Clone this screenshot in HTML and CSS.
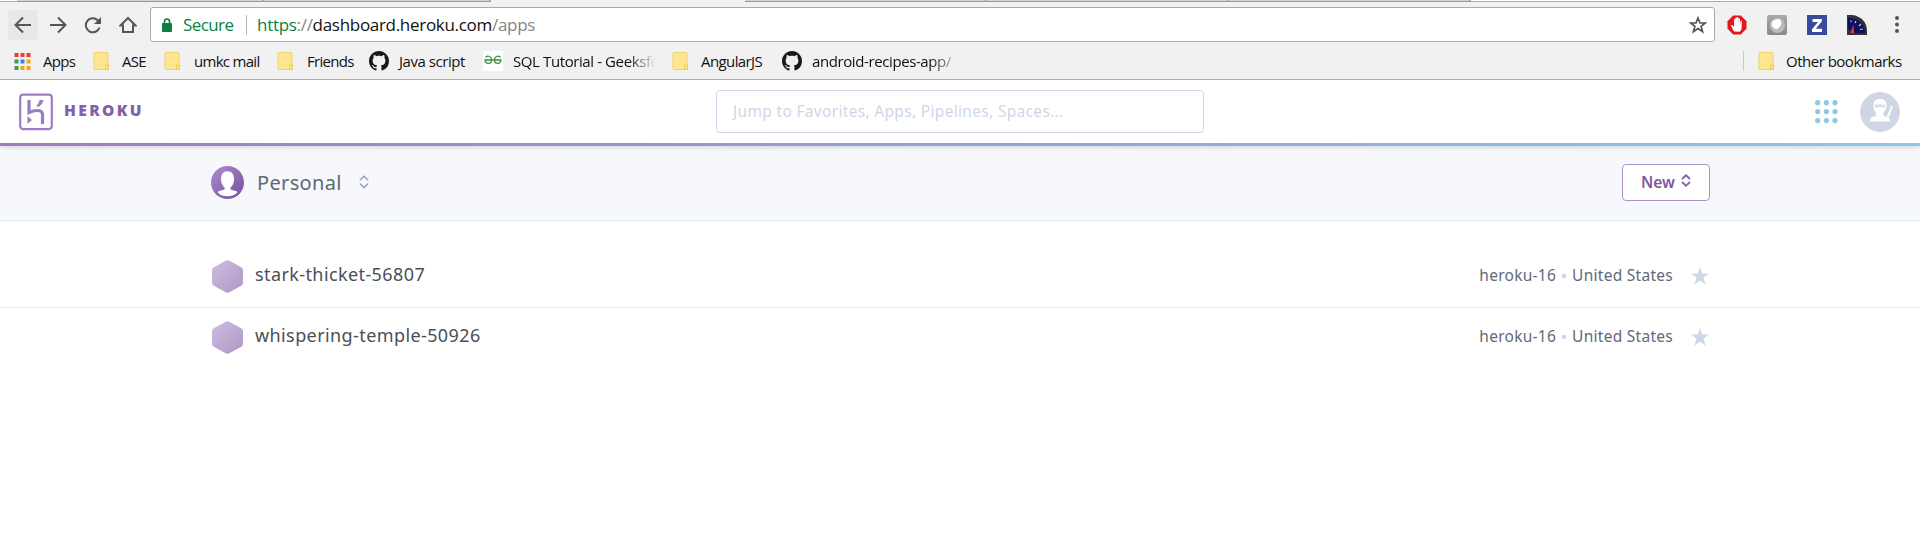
FILE: index.html
```html
<!DOCTYPE html>
<html lang="en">
<head>
<meta charset="utf-8">
<title>Heroku Dashboard</title>
<link rel="stylesheet" href="styles.css">
</head>
<body>
<svg class="defs" width="0" height="0" aria-hidden="true">
  <defs>
    <linearGradient id="purple" x1="0" y1="0" x2="1" y2="1"><stop offset="0" stop-color="#ac8dcf"/><stop offset="1" stop-color="#764f9c"/></linearGradient>
    <linearGradient id="lilac" x1="0" y1="0" x2="1" y2="1"><stop offset="0" stop-color="#cdbde1"/><stop offset="1" stop-color="#ae97c4"/></linearGradient>
    <linearGradient id="silver" x1="0" y1="0" x2="0" y2="1"><stop offset="0" stop-color="#aaa"/><stop offset="1" stop-color="#888"/></linearGradient>
    <symbol id="folder" viewBox="0 0 16 20"><path d="M2 1.500h12a1 1 0 0 1 1 1V18.500H2a1 1 0 0 1-1-1v-15a1 1 0 0 1 1-1z" fill="#ffe58f" stroke="#f0d269"/><path d="M12.500 18.500v-4.500h3v4.500z" fill="#ffe680" stroke="#f0cb45"/></symbol>
    <symbol id="github" viewBox="0 0 16 16"><path fill="#181818" d="M8 0C3.580 0 0 3.580 0 8c0 3.540 2.290 6.530 5.470 7.590.4.070.55-.17.55-.38 0-.19-.01-.82-.01-1.490-2.010.37-2.530-.49-2.690-.94-.09-.23-.48-.94-.82-1.130-.28-.15-.68-.52-.01-.53.63-.01 1.080.58 1.230.82.72 1.210 1.870.87 2.330.66.070-.52.28-.87.51-1.070-1.780-.2-3.640-.89-3.640-3.950 0-.87.31-1.590.82-2.150-.08-.2-.36-1.020.08-2.120 0 0 .67-.21 2.200.82.64-.18 1.320-.27 2-.27s1.360.09 2 .27c1.530-1.040 2.200-.82 2.200-.82.44 1.100.16 1.920.08 2.120.51.56.82 1.270.82 2.150 0 3.070-1.870 3.750-3.650 3.950.29.25.54.73.54 1.480 0 1.070-.01 1.930-.01 2.200 0 .21.15.46.55.38A8.010 8.010 0 0 0 16 8c0-4.420-3.580-8-8-8z"/></symbol>
    <symbol id="hexagon" viewBox="0 0 31 33"><path d="M13.700.7Q15.500-.3 17.300.7L29.200 7.300Q31 8.300 31 10.300V22.700Q31 24.700 29.200 25.700L17.300 32.300Q15.500 33.300 13.700 32.300L1.800 25.700Q0 24.700 0 22.700V10.300Q0 8.300 1.800 7.300Z" fill="url(#lilac)"/></symbol>
    <symbol id="star" viewBox="0 0 18 18"><path d="M9 0l2.200 6.500H18l-5.500 4.100 2.200 7.100L9 13.500l-5.700 4.200 2.200-7.100L0 6.500h6.800z" fill="#cfd7e6"/></symbol>
  </defs>
</svg>

<div class="browser">
  <div class="tabs"><i class="tab first"></i><i class="tab second"></i><i class="active-gap"></i><i class="tab"></i><i class="tab"></i><i class="tab"></i></div>
  <div class="toolbar">
    <span class="back"><svg width="18" height="18" viewBox="0 0 18 18"><path d="M9 1.500L1.500 9L9 16.500M1.500 9H17" class="nav-line"/></svg></span>
    <svg class="forward" width="18" height="18" viewBox="0 0 18 18"><path d="M9 1.500l7.500 7.500L9 16.500M16.500 9H1" class="nav-line"/></svg>
    <svg class="reload" width="18" height="18" viewBox="0 0 18 18"><path d="M15.500 11.500A7 7 0 1 1 13.500 4l1.500 1.500" class="nav-line"/><path d="M17 1v7h-7z" fill="#555"/></svg>
    <svg class="home" width="18" height="18" viewBox="0 0 18 18"><path d="M1.500 9.500L9 2l7.500 7.500H14V16H4V9.500z" class="nav-line"/></svg>
    <div class="omnibox">
      <svg class="lock" width="10" height="14" viewBox="0 0 10 14"><path d="M2.500 6V3.500a2.500 2.500 0 0 1 5 0V6" fill="none" stroke="#0b8043" stroke-width="1.600"/><rect y="5" width="10" height="9" rx="1" fill="#0b8043"/></svg>
      <span class="secure">Secure</span>
      <span class="url"><b>https</b>://<em>dashboard.heroku.com</em>/apps</span>
      <svg class="bookmark-star" width="18" height="18" viewBox="0 0 18 18"><path d="M9 2l2 5h5.300l-4.200 3.400 1.500 5.300L9 12.600l-4.600 3.100 1.500-5.300L1.700 7H7z" fill="none" stroke="#555" stroke-width="1.700"/></svg>
    </div>
    <div class="extensions">
      <svg width="20" height="20" viewBox="0 0 20 20"><path d="M6.200.5h7.600l5.700 5.700v7.600l-5.700 5.700H6.200L.5 13.800V6.200z" fill="#e2191c"/><path d="M7 16.500L4.200 11c-.3-1 1-1.500 1.600-.6L7 12V4.500c0-1 1.400-1 1.400 0V9V3c0-1.100 1.500-1.100 1.500 0v6V2.800c0-1 1.500-1 1.500 0V9l.2-5c0-1 1.400-1 1.400 0v6l.5-4c.1-.8 1.300-.7 1.300.2L14.600 13c-.2 2-1.200 3.500-2 3.700z" fill="#fff"/></svg>
      <svg width="20" height="20" viewBox="0 0 20 20"><rect width="20" height="20" rx="2" fill="url(#silver)"/><circle cx="10.500" cy="10.500" r="7.500" fill="#bbb"/><path d="M4.500 8c1-3 5-4.500 8-4 3 3 2 6-.5 8.500-2 2.500-4 1.500-5.500 0-2-1-2-2-2-4.500z" fill="#fff"/></svg>
      <svg width="20" height="20" viewBox="0 0 20 20"><rect width="20" height="20" fill="#394a9b"/><path d="M5.500 4h9.300v2.500l-6 7.200h6.200V17H5v-2.700l6-7.200H5.500z" fill="#fff"/></svg>
      <svg width="20" height="20" viewBox="0 0 20 20"><path d="M0 0h5c9 1 15 7 15 16v4H0z" fill="#333"/><path d="M1 3c9-1 17 6 17 14v1H7L1 14z" fill="#11105a"/><path d="M3.500 5.500l1 1.500M9 6L8 8M14 9l-2 2M16 14l-3 .5" stroke="#b9c4ff" stroke-width="1.200"/><path d="M6.500 9.500L7 18H3.500z" fill="#f2363d"/></svg>
      <svg class="menu" width="4" height="17" viewBox="0 0 4 17"><g fill="#555"><circle cx="2" cy="2" r="2"/><circle cx="2" cy="8.500" r="2"/><circle cx="2" cy="15" r="2"/></g></svg>
    </div>
  </div>
  <div class="bookmarks">
    <svg class="apps-icon" width="17" height="17" viewBox="0 0 16 17"><g fill="#f33a35"><path d="M0 0h4v4H0zM6 0h4v4H6zM12 0h4v4h-4z"/></g><g fill="#34a15a"><path d="M0 6.500h4v4H0zM0 13h4v4H0z"/></g><path d="M6 6.500h4v4H6z" fill="#2a86f0"/><path d="M12 6.500h4v4h-4zM6 13h4v4H6zM12 13h4v4h-4z" fill="#f9a60c"/></svg>
    <span class="bm-text bm-apps">Apps</span>
    <svg class="folder"><use href="#folder"/></svg><span class="bm-text bm-ase">ASE</span>
    <svg class="folder"><use href="#folder"/></svg><span class="bm-text bm-mail">umkc mail</span>
    <svg class="folder"><use href="#folder"/></svg><span class="bm-text bm-friends">Friends</span>
    <svg class="github"><use href="#github"/></svg><span class="bm-text bm-java">Java script</span>
    <svg class="geeks" width="20" height="20" viewBox="0 0 20 20"><path d="M0 0h20v20H0z" fill="#fff"/><path d="M2.500 6.300C5 4 8.500 5.500 8.500 9c0 4.500-6 4.500-6.500 0h16c-.5 4.500-6.500 4.500-6.500 0 0-3.500 3.500-5 6-2.700" fill="none" stroke="#3e8d48" stroke-width="1.300"/></svg>
    <span class="bm-text bm-sql">SQL Tutorial - Geeksfo</span>
    <svg class="folder"><use href="#folder"/></svg><span class="bm-text bm-angular">AngularJS</span>
    <svg class="github"><use href="#github"/></svg><span class="bm-text bm-android">android-recipes-app/</span>
    <div class="other"><svg class="folder"><use href="#folder"/></svg><span class="bm-text bm-other">Other bookmarks</span></div>
  </div>
</div>

<header class="header">
  <a class="brand">
    <svg width="34" height="38" viewBox="0 0 34 38"><rect x="1.200" y="1.600" width="31.600" height="34.500" rx="3" fill="#fff" stroke="#9e7cc1" stroke-width="2.200"/><path d="M10 7v12.500c4-2 13.500-4 13.500 2V31" fill="none" stroke="#9e7cc1" stroke-width="3.200"/><path d="M8.500 23l4.500 4-4.500 4zM20.500 7h4c-.5 2.500-2 4.500-4 6.500H17c1.800-2 3-4 3.500-6.500z" fill="#9e7cc1"/></svg>
    <span>HEROKU</span>
  </a>
  <div class="search"><span>Jump to Favorites, Apps, Pipelines, Spaces...</span></div>
  <div class="account">
    <svg width="23" height="24" viewBox="0 0 23 24"><g fill="#8cc8e8"><circle cx="2.700" cy="2.700" r="2.600"/><circle cx="11.400" cy="2.700" r="2.600"/><circle cx="20" cy="2.700" r="2.600"/><circle cx="2.700" cy="11.600" r="2.600"/><circle cx="11.400" cy="11.600" r="2.600"/><circle cx="20" cy="11.600" r="2.600"/><circle cx="2.700" cy="20.600" r="2.600"/><circle cx="11.400" cy="20.600" r="2.600"/><circle cx="20" cy="20.600" r="2.600"/></g></svg>
    <svg width="40" height="40" viewBox="0 0 40 40"><circle cx="20" cy="20" r="19.500" fill="#cfd7e6" stroke="#d8d8df"/><path d="M13.500 12c0-3.500 3-5 6.500-5s6.500 1.500 6.500 5c0 5-1.500 7-3 8.500v3l3 1.500 5-11.500 1.500.7-4.300 11.500c1 1 1.300 2 1.300 3.800H10c0-3.500 2-4.800 6-5.500v-3.500c-1.500-1.500-2.500-4-2.500-8.500z" fill="#fff"/><path d="M15 12.500h10v2.500c-2 1-3 .5-4 0h-2c-1 .5-3 1-4 0z" fill="#cfd7e6"/><path d="M16.500 13.700h2m3 0h2" stroke="#fff"/></svg>
  </div>
</header>

<section class="context">
  <div class="container">
    <svg width="33" height="33" viewBox="0 0 33 33"><circle cx="16.500" cy="16.500" r="16.500" fill="url(#purple)"/><path d="M16.500 5.200c4.500 0 6.500 3.300 6.500 7.800 0 4-1.500 7-3.500 8.500v2c1.500 1 5 1 7 2.500-2 3-6 4.300-10 4.300S8.500 29 6.500 26c2-1.500 5.500-1.500 7-2.500v-2C11.500 20 10 17 10 13c0-4.500 2-7.800 6.500-7.800z" fill="#fff"/></svg>
    <span class="personal">Personal</span>
    <svg width="10" height="14" viewBox="0 0 10 14"><path d="M.8 5.300L5 1.200l4.200 4.100M.8 8.500L5 12.600l4.200-4.100" fill="none" stroke="#96a3b8" stroke-width="1.500"/></svg>
    <button class="new"><span>New</span><svg width="10" height="14" viewBox="0 0 10 14"><path d="M1 5l4-3.700L9 5M1 8l4 3.700L9 8" fill="none" stroke="#8965ad" stroke-width="2"/></svg></button>
  </div>
</section>

<main class="apps">
  <div class="app"><div class="container"><svg class="hex"><use href="#hexagon"/></svg><span class="name">stark-thicket-56807</span><span class="stack">heroku-16</span><i class="dot"></i><span class="region">United States</span><svg class="fav"><use href="#star"/></svg></div></div>
  <div class="app"><div class="container"><svg class="hex"><use href="#hexagon"/></svg><span class="name">whispering-temple-50926</span><span class="stack">heroku-16</span><i class="dot"></i><span class="region">United States</span><svg class="fav"><use href="#star"/></svg></div></div>
</main>
</body>
</html>
```

FILE: styles.css
```css
* { box-sizing: border-box; }
body { margin: 0; background: #fff; font-family: "Noto Sans", sans-serif; color: #4a4f57; height: 557px; overflow: hidden; }
svg { display: block; flex: none; }
.defs { position: absolute; }
span { white-space: nowrap; }

.browser { height: 80px; background: #f1f1f1; border-bottom: 1px solid #b0b0b0; font-family: "Open Sans", sans-serif; color: #111; }
.tabs { display: flex; height: 2px; border-bottom: 1px solid #aaa; background: #fff; padding-left: 17px; }
.tab { flex: none; width: 242px; height: 2px; background: #d5d5d5; border-right: 2px solid #aaa; border-bottom: 1px solid #999; }
.tab.first { width: 247px; }
.tab.second { width: 227px; }
.active-gap { flex: none; width: 254px; height: 2px; background: #f1f1f1; }
.toolbar { display: flex; align-items: center; height: 45px; }
.nav-line { fill: none; stroke: #555; stroke-width: 2; }
.back { display: flex; align-items: center; justify-content: center; width: 30px; height: 30px; margin-left: 8px; background: #e8e8e8; border-radius: 3px; }
.forward { margin-left: 11px; }
.reload { margin-left: 17px; }
.home { margin-left: 17px; }
.omnibox { display: flex; flex: none; align-items: center; width: 1565px; height: 35px; margin-left: 13px; background: #fff; border: 1px solid #aaa; border-radius: 3px; font-size: 17px; }
.lock { margin-left: 11px; }
.secure { width: 64px; margin-left: 11px; color: #0b8043; letter-spacing: -.6px; border-right: 1px solid #b5b5b5; line-height: 20px; }
.url { margin-left: 10px; color: #858585; letter-spacing: -.3px; }
.url b { color: #0b8043; font-weight: 400; }
.url em { color: #111; font-style: normal; }
.bookmark-star { margin: 0 7px 0 auto; }
.extensions { display: flex; align-items: center; gap: 20px; margin-left: 12px; }
.menu { margin-left: 8px; }
.bookmarks { display: flex; align-items: center; height: 28px; font-size: 15px; }
.apps-icon { margin-left: 14px; }
.bm-text { flex: none; letter-spacing: -.7px; line-height: 20px; margin-bottom: 1px; }
.bm-apps { margin-left: 12px; width: 50px; }
.folder { width: 16px; height: 20px; }
.bm-ase { margin-left: 13px; width: 42px; }
.bm-mail { margin-left: 14px; width: 83px; }
.bm-friends { margin-left: 14px; width: 62px; }
.github { width: 20px; height: 20px; }
.bm-java { margin-left: 10px; width: 84px; letter-spacing: -.45px; }
.bm-sql { margin-left: 10px; width: 159px; letter-spacing: -.4px; -webkit-mask: linear-gradient(90deg, #000 115px, transparent 143px); mask: linear-gradient(90deg, #000 115px, transparent 143px); }
.bm-angular { margin-left: 13px; width: 81px; letter-spacing: -.6px; }
.bm-android { margin-left: 10px; width: 145px; letter-spacing: -.4px; -webkit-mask: linear-gradient(90deg, #000 118px, transparent 150px); mask: linear-gradient(90deg, #000 118px, transparent 150px); }
.other { display: flex; align-items: center; height: 20px; margin-left: auto; padding-left: 14px; border-left: 1px solid #c8c8c8; }
.bm-other { margin-left: 12px; width: 134px; letter-spacing: -.5px; }

.header { display: grid; grid-template-columns: 1fr 488px 1fr; align-items: center; height: 66px; padding: 0 20px 3px 20px; background: linear-gradient(90deg, #9e7cc1, #8cc8e8) bottom / 100% 3px no-repeat #fff; box-shadow: 0 2px 4px rgba(0, 0, 0, .12); position: relative; }
.brand { display: flex; align-items: center; gap: 11px; margin-left: -1px; color: #8560a9; font: 800 15.500px "Open Sans", sans-serif; letter-spacing: 2.400px; }
.brand span { margin-bottom: 4px; }
.search { height: 43px; padding: 0 16px; border: 1px solid #cfd7e6; border-radius: 4px; color: #cfd7e6; font-size: 15.500px; letter-spacing: .32px; line-height: 41px; }
.account { display: flex; align-items: center; justify-content: flex-end; gap: 22px; }

.container { display: flex; align-items: center; width: 1500px; height: 100%; margin: 0 auto; }
.context { height: 75px; background: #f7f8fc; border-bottom: 1px solid #e3e8ef; }
.context .container { padding: 0 0 2px 1px; }
.personal { margin-left: 13px; width: 102px; font-size: 20px; letter-spacing: .35px; color: #5d6878; }
.new { display: flex; align-items: center; gap: 6px; width: 88px; height: 37px; margin-left: auto; padding: 0 0 0 18px; background: #fff; border: 1px solid #ae93cb; border-radius: 4px; color: #79589f; font: 600 15.500px "Noto Sans", sans-serif; }
.new svg { margin-bottom: 2px; }
.apps { padding-top: 24px; }
.app { height: 58px; }
.app:first-child { height: 63px; border-bottom: 1px solid #ebedf0; }
.app .container { padding: 0 1px 0 2px; }
.hex { width: 31px; height: 33px; }
.name { margin: 0 auto 4px 12px; font-size: 18px; letter-spacing: .4px; }
.stack, .region { margin-bottom: 2px; font-size: 15.500px; letter-spacing: .27px; color: #62697a; }
.dot { width: 4px; height: 4px; margin: 0 6px 1px; background: #cfd7e6; border-radius: 1px; }
.fav { width: 18px; height: 18px; margin-left: 18px; }
```
